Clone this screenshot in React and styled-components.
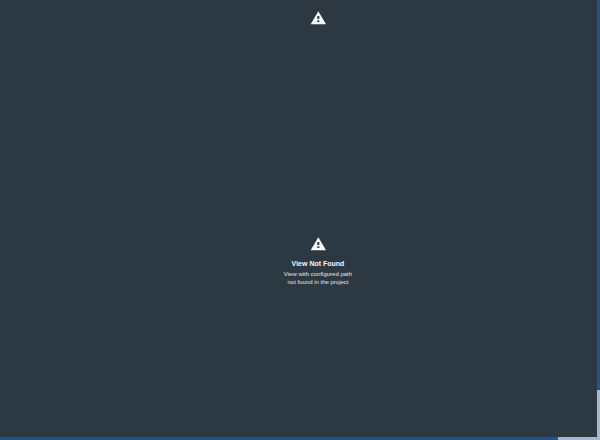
import React from "react";
import styled, { createGlobalStyle } from "styled-components";

const GlobalStyle = createGlobalStyle`
  body {
    margin: 0;
    background: #2d3942;
    font-family: "Liberation Sans", Arial, sans-serif;
  }
`;

const Frame = styled.div`
  display: grid;
  grid-template-columns: 1fr 3px;
  grid-template-rows: 1fr 3px;
  min-height: 100vh;
  background: #2d3942;
`;

const Content = styled.main`
  display: flex;
  flex-direction: column;
  align-items: center;
  gap: 210px;
  padding: 10px 0 10px 39px;
  color: #f5f7f8;
`;

const Notice = styled.section`
  display: flex;
  flex-direction: column;
  align-items: center;
  text-align: center;
`;

const Icon = styled.svg`
  display: block;
  width: 16px;
  height: 16px;
  fill: #fafafa;
`;

const Title = styled.h1`
  margin: 7px 0 1px;
  font-size: 7px;
  line-height: 10px;
  font-weight: 700;
`;

const Message = styled.p`
  margin: 0;
  color: #e4e7e9;
  font-size: 6px;
  line-height: 8px;
`;

const VerticalTrack = styled.div`
  display: flex;
  flex-direction: column;
  grid-row: 1 / 3;
  grid-column: 2;
  background: #a4b7ce;
`;

const HorizontalTrack = styled.div`
  display: flex;
  grid-row: 2;
  grid-column: 1;
  background: #a4b7ce;
`;

const Thumb = styled.div`
  flex: 0 0 ${({ $extent }) => $extent};
  background: #24508c;
`;

function WarningIcon() {
  return (
    <Icon viewBox="0 0 24 24" aria-hidden="true">
      <path
        fillRule="evenodd"
        d="M1 21.5h23L12.5 2 1 21.5zM11 9h3v4.5h-3zM11 15.5h3V18h-3z"
      />
    </Icon>
  );
}

export default function App() {
  return (
    <>
      <GlobalStyle />
      <Frame>
        <Content>
          <Notice>
            <WarningIcon />
          </Notice>
          <Notice>
            <WarningIcon />
            <Title>View Not Found</Title>
            <Message>
              View with configured path
              <br />
              not found in the project
            </Message>
          </Notice>
        </Content>
        <VerticalTrack>
          <Thumb $extent="88.7%" />
        </VerticalTrack>
        <HorizontalTrack>
          <Thumb $extent="93.5%" />
        </HorizontalTrack>
      </Frame>
    </>
  );
}
